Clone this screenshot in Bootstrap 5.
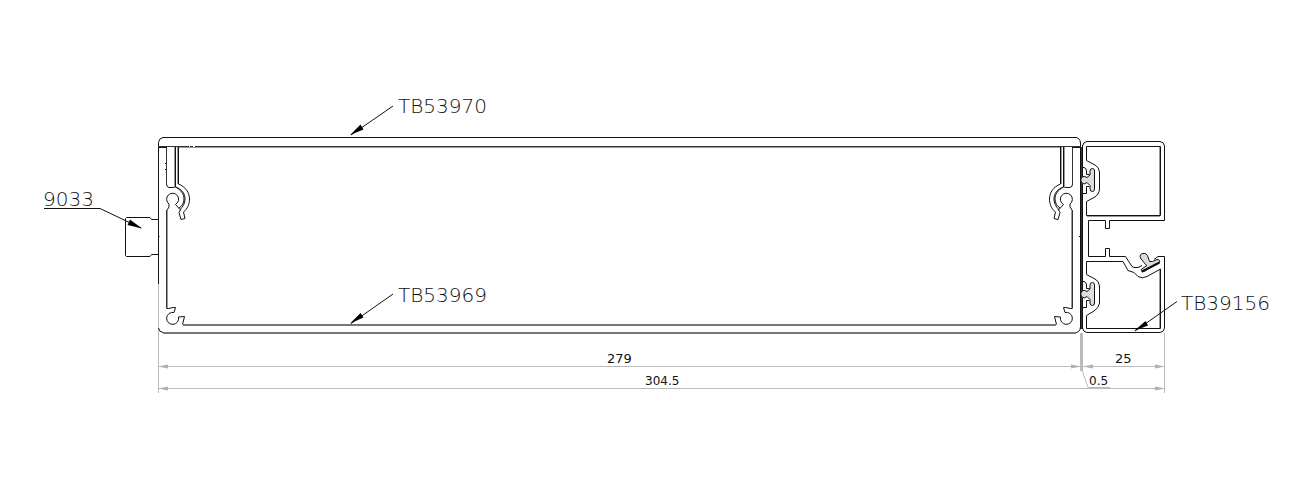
<!DOCTYPE html>
<html lang="en">
<head>
<meta charset="utf-8">
<meta name="viewport" content="width=device-width, initial-scale=1">
<title>Profile assembly TB53969 / TB53970 / TB39156</title>
<link href="https://cdn.jsdelivr.net/npm/bootstrap@5.3.0/dist/css/bootstrap.min.css" rel="stylesheet">
<style>
.drawing { font-family: "DejaVu Sans", sans-serif; fill: none; stroke: #111; stroke-width: 1; }
.drawing .hair { stroke: #333; }
.drawing .edge { stroke: #777; stroke-width: 2; }
.drawing .soft { stroke: #999; }
.drawing .dims { stroke: #bbb; }
.drawing .dims .tip { fill: #b0b0b0; stroke: none; }
.drawing .tip { fill: #000; stroke: none; }
.drawing .gasket { fill: #ddd; stroke-linejoin: round; }
.drawing text { fill: #111; stroke: none; }
.drawing .part { font-size: 20px; font-weight: 200; }
.drawing .dim { font-size: 13px; }
.drawing .dim-s { font-size: 12px; }
</style>
</head>
<body class="bg-white">
<main class="container-fluid p-0">
<svg class="drawing d-block w-100 h-auto" viewBox="0 0 1314 477" role="img" aria-label="Profile cross-section with part numbers and dimensions">
  <defs>
    <path id="arrow" d="M0 0L10 -2V2Z"/>
    <!-- snap clip, screw port and inner wall at one side of the box -->
    <g id="side">
      <path class="soft" d="M1061.500 147V184M1064.500 147V186M1071.500 211V308"/>
      <path d="M1060.500 147V184C1053 187 1049.500 193 1049.500 199C1049.500 204 1051.500 209 1055.500 212L1054 218.500L1058 219.500L1060 212.500L1058 209"/>
      <path d="M1063.500 147V187C1057 189 1054 194 1054 199C1054 203 1056 207 1059 209.500L1063.500 204.500A6 6 0 1 1 1070 204L1070 207L1072.500 211"/>
      <path d="M1063.500 187C1058 190 1055 194 1055 199C1055 203 1057 206 1060 208"/>
      <path d="M1063.500 187L1067 187.500H1070Q1072.500 187 1072.500 184"/>
      <path class="hair" d="M1072.500 147V184M1072.500 210V308"/>
      <path d="M1072.500 308.500C1069 309 1067 307 1063.500 307.500L1065 312.500A6 6 0 1 1 1060.500 317L1054.500 316.500L1056.500 324.500"/>
      <path d="M1072 147.500H1081"/>
    </g>
    <!-- T-shaped seal in its slot -->
    <g id="seal">
      <path d="M1082 167.500H1084Q1086.500 168 1086.500 171V174.500H1089.500M1082 193.500H1086.500V186.500H1089.500"/>
      <path class="gasket" d="M1090 175V171Q1090 168.500 1092.500 168.500Q1094.500 168.500 1094.500 171V189Q1094.500 191.500 1092.500 191.500Q1090 191.500 1090 189V185.500L1087 182.500Q1084 185.500 1081.500 182.500Q1080 180 1081.500 177.500Q1084 175 1087 177.500Z"/>
    </g>
  </defs>

  <g class="dims">
    <path d="M158.500 284V393M1164.500 333V393M158 366.500H1165M158 388.500H1165M1082 370L1088 387.500H1110"/>
    <path stroke-width="3" d="M1081.500 333V371"/>
    <use class="tip" href="#arrow" x="158" y="366.500"/>
    <use class="tip" href="#arrow" x="158" y="388.500"/>
    <use class="tip" href="#arrow" x="1083" y="366.500"/>
    <use class="tip" href="#arrow" transform="translate(1081 366.500) scale(-1 1)"/>
    <use class="tip" href="#arrow" transform="translate(1165 366.500) scale(-1 1)"/>
    <use class="tip" href="#arrow" transform="translate(1165 388.500) scale(-1 1)"/>
  </g>

  <!-- box -->
  <path d="M158.500 284V142.500Q159 138 163 137.500H1076Q1080 138 1080.500 143V147M158.500 328Q159 332 163 332.500M1076 332.500Q1080 332 1080.500 327"/>
  <path class="edge" d="M163 333H1076M183 325H1056"/>
  <path class="soft" d="M178 147.500H1061"/>
  <path class="hair" d="M158 146.500H189M190 146.500H193M195 146.500H1081"/>
  <path d="M1080.500 147V329M1082.500 145V329"/>
  <path class="hair" d="M1081.500 147V329"/>
  <use href="#side"/>
  <use href="#side" transform="translate(1239 0) scale(-1 1)"/>
  <path d="M188 147l1 -1M195 147l1 -1M166 163l-1 1M166 170l-1 -1M158.500 236l1 1M1080 236l-1 1M1089 236l-1 1"/>

  <!-- connector 9033 -->
  <path d="M158 219.500H151.500L150 217.500H126.500L125.500 218.500V255.500L126.500 256.500H150L151.500 254.500H158"/>

  <!-- right-hand profile -->
  <path class="soft" d="M1159.500 147V215M1087 216.500H1160M1159.500 270V328"/>
  <path d="M1082.500 146Q1083 142 1087 141.500H1160Q1164 142 1164.500 146V220.500H1109.500V228.500H1105.500V220.500H1088.500V256.500H1105.500V248.500H1109.500V256.500H1125.500L1132 266.500L1134 267.500H1138L1142 265.500M1154 259.500L1158 256.500H1164.500V328Q1164 332 1160 332.500H1087Q1083 332 1082.500 328"/>
  <path d="M1086.500 160.500V146.500H1160.500V215.500H1086.500V201.500L1094 197.500Q1099 195 1099.500 189V172Q1099 167 1095 165Z"/>
  <path d="M1086.500 274.500V261.500H1123L1128 270.500L1134 272.500L1138 276.500Q1142 279 1147 276.500L1160.500 269V328.500H1086.500V315.500L1094 311Q1099 308 1099.500 303V286Q1099 281 1095 279Z"/>
  <use href="#seal"/>
  <use href="#seal" y="114"/>
  <path class="gasket" d="M1145.500 264.500L1140.500 258Q1139 254 1143 253.500Q1147 253 1148 257L1149.500 261.500L1152.500 261.500L1157 259.500Q1160.500 259.500 1159.500 262.500L1144 271.500Q1140.500 272.500 1141.500 269L1147 265.500Z"/>
  <path stroke-width="2" d="M1142 271.500L1159.500 262.500"/>

  <!-- leaders -->
  <path d="M393 106L351 135M393 294L351 323.500M1177 301.500L1135 331M44 208.500H100L141 228"/>
  <path class="tip" d="M350 135L360.500 124.500L363.500 129.500ZM350 323.500L360.500 313L363.500 317.500ZM1134 331L1145.500 321L1148 325.500ZM142 228.500L127.500 225L130 219.500Z"/>

  <text class="part" x="398" y="113">TB53970</text>
  <text class="part" x="398" y="302">TB53969</text>
  <text class="part" x="1181" y="310">TB39156</text>
  <text class="part" x="43" y="206">9033</text>
  <text class="dim" x="607" y="363">279</text>
  <text class="dim" x="1115" y="363">25</text>
  <text class="dim-s" x="645" y="385">304.5</text>
  <text class="dim-s" x="1089" y="385">0.5</text>
</svg>
</main>
<script src="https://cdn.jsdelivr.net/npm/bootstrap@5.3.0/dist/js/bootstrap.bundle.min.js"></script>
</body>
</html>
